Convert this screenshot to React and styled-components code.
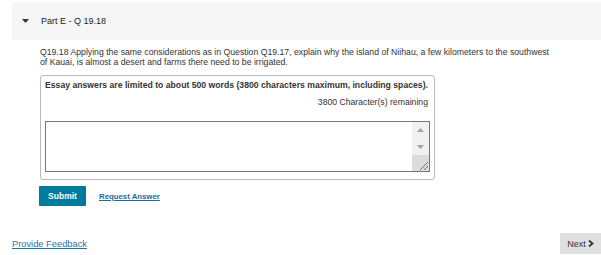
import React from "react";
import styled, { createGlobalStyle } from "styled-components";

const Global = createGlobalStyle`
  html, body {
    margin: 0;
    padding: 0;
    background: #fff;
  }
  body {
    font-family: "Liberation Sans", Arial, sans-serif;
    color: #333;
  }
`;

const Page = styled.div`
  width: 601px;
  height: 255px;
  display: flex;
  flex-direction: column;
  overflow: hidden;
`;

const Header = styled.div`
  margin: 2px 0 0 12px;
  height: 38px;
  background: #f6f6f6;
  display: flex;
  align-items: center;
  padding-left: 10px;
  gap: 12px;
  font-size: 9px;
  color: #222;
`;

const Content = styled.div`
  padding: 7px 0 0 40px;
`;

const Question = styled.p`
  margin: 0;
  width: 512px;
  font-size: 8.7px;
  line-height: 10px;
  color: #333;
`;

const AnswerBox = styled.div`
  margin-top: 8px;
  width: 395px;
  height: 105px;
  box-sizing: border-box;
  border: 1px solid #b9b9b9;
  border-radius: 3px;
  padding: 3px 6px 0 4px;
  display: flex;
  flex-direction: column;
`;

const Limit = styled.div`
  font-size: 8.67px;
  font-weight: bold;
  line-height: 12px;
  color: #333;
`;

const Remaining = styled.div`
  margin-top: 5px;
  text-align: right;
  font-size: 8.67px;
  line-height: 12px;
  color: #333;
`;

const AnswerFrame = styled.div`
  margin-top: 13px;
  width: 385px;
  height: 51px;
  box-sizing: border-box;
  border: 1px solid #777;
  display: flex;
`;

const Answer = styled.textarea`
  flex: 1;
  border: none;
  padding: 2px;
  resize: none;
  overflow: hidden;
  font-family: "Liberation Sans", Arial, sans-serif;
  font-size: 9px;
  outline: none;
`;

const ScrollRail = styled.div`
  width: 17px;
  background: #f1f1f1;
  display: flex;
  flex-direction: column;
`;

const ScrollArrow = styled.div`
  height: 17px;
  display: flex;
  align-items: center;
  justify-content: center;
`;

const Resizer = styled.div`
  margin-top: auto;
  height: 16px;
  background: #dcdcdc;
  display: flex;
  align-items: flex-end;
  justify-content: flex-end;
`;

const Actions = styled.div`
  display: flex;
  align-items: center;
  gap: 13px;
  margin: 6px 0 0 -1px;
`;

const SubmitButton = styled.button`
  width: 47px;
  height: 20px;
  border: none;
  border-radius: 1px;
  background: #007b9c;
  color: #fff;
  font-family: "Liberation Sans", Arial, sans-serif;
  font-size: 8.5px;
  font-weight: bold;
  padding: 0;
`;

const Link = styled.a`
  color: ${p => p.$color || "#1d6c9a"};
  font-size: ${p => p.$size || "8px"};
  font-weight: ${p => (p.$bold ? "bold" : "normal")};
  text-decoration: underline;
  cursor: pointer;
`;

const Footer = styled.div`
  margin-top: auto;
  display: flex;
  justify-content: space-between;
  align-items: center;
  padding: 0 0 1px 12px;
`;

const NextButton = styled.button`
  width: 41px;
  height: 21px;
  border: none;
  background: #e0e0e0;
  color: #333;
  font-family: "Liberation Sans", Arial, sans-serif;
  font-size: 9px;
  padding: 0;
  display: flex;
  align-items: center;
  justify-content: center;
  gap: 2px;
`;

export default function App() {
  return (
    <Page>
      <Global />
      <Header>
        <svg width="7" height="4" viewBox="0 0 7 4">
          <path d="M0 0 H7 L3.5 4 Z" fill="#333" />
        </svg>
        <span>Part E - Q 19.18</span>
      </Header>
      <Content>
        <Question>
          Q19.18 Applying the same considerations as in Question Q19.17, explain why the island of Niihau, a few kilometers to the southwest of Kauai, is almost a desert and farms there need to be irrigated.
        </Question>
        <AnswerBox>
          <Limit>Essay answers are limited to about 500 words (3800 characters maximum, including spaces).</Limit>
          <Remaining>3800 Character(s) remaining</Remaining>
          <AnswerFrame>
            <Answer />
            <ScrollRail>
              <ScrollArrow>
                <svg width="7" height="4" viewBox="0 0 7 4">
                  <path d="M0 4 H7 L3.5 0 Z" fill="#a3a3a3" />
                </svg>
              </ScrollArrow>
              <ScrollArrow>
                <svg width="7" height="4" viewBox="0 0 7 4">
                  <path d="M0 0 H7 L3.5 4 Z" fill="#a3a3a3" />
                </svg>
              </ScrollArrow>
              <Resizer>
                <svg width="12" height="12" viewBox="0 0 12 12">
                  <path d="M11 3 L3 11 M11 7 L7 11" stroke="#555" strokeWidth="0.8" />
                </svg>
              </Resizer>
            </ScrollRail>
          </AnswerFrame>
        </AnswerBox>
        <Actions>
          <SubmitButton>Submit</SubmitButton>
          <Link $bold $size="7.8px">Request Answer</Link>
        </Actions>
      </Content>
      <Footer>
        <Link $size="9.3px" $color="#1f72a4">Provide Feedback</Link>
        <NextButton>
          Next
          <svg width="6" height="7" viewBox="0 0 6 7">
            <path d="M1 0.5 L4.5 3.5 L1 6.5" fill="none" stroke="#333" strokeWidth="1.8" />
          </svg>
        </NextButton>
      </Footer>
    </Page>
  );
}
